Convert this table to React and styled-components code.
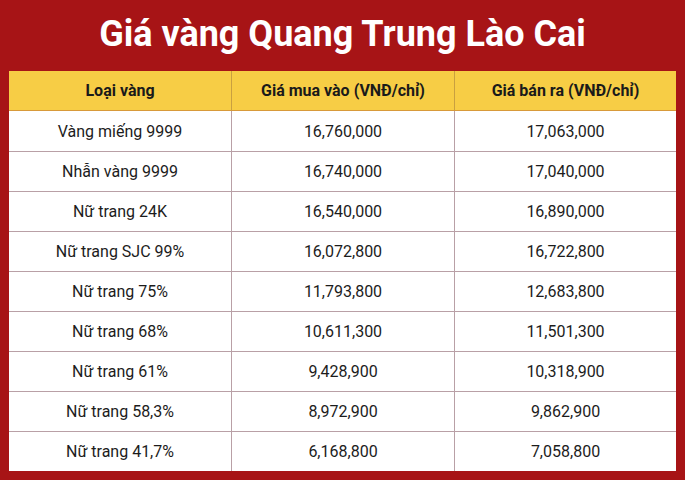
import React from 'react'
import styled, { createGlobalStyle } from 'styled-components'

const rows = [
  ['Vàng miếng 9999', '16,760,000', '17,063,000'],
  ['Nhẫn vàng 9999', '16,740,000', '17,040,000'],
  ['Nữ trang 24K', '16,540,000', '16,890,000'],
  ['Nữ trang SJC 99%', '16,072,800', '16,722,800'],
  ['Nữ trang 75%', '11,793,800', '12,683,800'],
  ['Nữ trang 68%', '10,611,300', '11,501,300'],
  ['Nữ trang 61%', '9,428,900', '10,318,900'],
  ['Nữ trang 58,3%', '8,972,900', '9,862,900'],
  ['Nữ trang 41,7%', '6,168,800', '7,058,800'],
]

const GlobalStyle = createGlobalStyle`
  html, body { margin: 0; padding: 0; }
  body {
    background: #a71416;
    font-family: Roboto, "Liberation Sans", sans-serif;
  }
`

const Page = styled.div`
  width: 685px;
  height: 480px;
  box-sizing: border-box;
  padding: 0 9px;
  display: flex;
  flex-direction: column;
  background: #a71416;
`

const Title = styled.h1`
  margin: 0;
  height: 71px;
  display: flex;
  align-items: center;
  justify-content: center;
  color: #fff;
  font-size: 36px;
  font-weight: 700;
  padding-bottom: 4px;
  box-sizing: border-box;
`

const Table = styled.div`
  display: grid;
  grid-template-columns: 222px 223px 222px;
  grid-auto-rows: 40px;
  background: #fff;
`

const Cell = styled.div`
  display: flex;
  align-items: center;
  justify-content: center;
  font-size: 16px;
  color: #1c1c1c;
  box-sizing: border-box;
  border-left: ${p => (p.$first ? 'none' : '1px solid #b9a0a6')};
  border-top: ${p => (p.$top ? '1px solid #b9a0a6' : 'none')};
`

const Head = styled(Cell)`
  background: #f7cd45;
  font-weight: 700;
  color: #1a1a1a;
  border-bottom: 1px solid #d89a3a;
  border-left-color: #c9a040;
`

export default function App() {
  return (
    <Page>
      <GlobalStyle />
      <Title>Giá vàng Quang Trung Lào Cai</Title>
      <Table>
        <Head $first>Loại vàng</Head>
        <Head>Giá mua vào (VNĐ/chỉ)</Head>
        <Head>Giá bán ra (VNĐ/chỉ)</Head>
        {rows.map((r, i) =>
          r.map((c, j) => (
            <Cell key={i + '-' + j} $first={j === 0} $top={i > 0}>
              {c}
            </Cell>
          ))
        )}
      </Table>
    </Page>
  )
}
